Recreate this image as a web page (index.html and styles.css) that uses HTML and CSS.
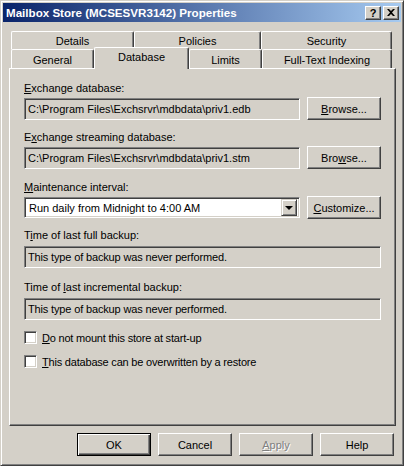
FILE: index.html
```html
<!DOCTYPE html>
<html lang="en">
<head>
    <meta charset="UTF-8">
    <meta name="viewport" content="width=device-width, initial-scale=1.0">
    <title>Mailbox Store Properties</title>
    <link rel="stylesheet" href="styles.css">
</head>
<body>

<div class="window">
    <div class="titlebar">
        <span class="title">Mailbox Store (MCSESVR3142) Properties</span>
        <div class="caption-btns">
            <span class="cap-btn help">?</span>
            <span class="cap-btn">
                <svg width="8" height="7" viewBox="0 0 8 7"><path d="M0 0h2l2 2 2-2h2L5 3.5 8 7H6L4 5 2 7H0l3-3.5z" fill="#000"/></svg>
            </span>
        </div>
    </div>

    <div class="dlg-body">
        <!-- pestañas -->
        <div class="tab-row back">
            <div class="tab w-details">Details</div>
            <div class="tab w-policies">Policies</div>
            <div class="tab w-security">Security</div>
        </div>
        <div class="tab-row front">
            <div class="tab w-general">General</div>
            <div class="tab active w-database">Database</div>
            <div class="tab w-limits">Limits</div>
            <div class="tab w-fulltext">Full-Text Indexing</div>
        </div>

        <div class="panel">
            <div class="group g1">
                <div class="label"><u>E</u>xchange database:</div>
                <div class="field-row">
                    <div class="field ro">C:\Program Files\Exchsrvr\mdbdata\priv1.edb</div>
                    <span class="btn"><u>B</u>rowse...</span>
                </div>
            </div>

            <div class="group g2">
                <div class="label">E<u>x</u>change streaming database:</div>
                <div class="field-row">
                    <div class="field ro">C:\Program Files\Exchsrvr\mdbdata\priv1.stm</div>
                    <span class="btn">Bro<u>w</u>se...</span>
                </div>
            </div>

            <div class="group g3">
                <div class="label"><u>M</u>aintenance interval:</div>
                <div class="field-row">
                    <div class="combo">
                        <span class="combo-text">Run daily from Midnight to 4:00 AM</span>
                        <span class="combo-btn"><span class="arrow"></span></span>
                    </div>
                    <span class="btn"><u>C</u>ustomize...</span>
                </div>
            </div>

            <div class="group g4">
                <div class="label">T<u>i</u>me of last full backup:</div>
                <div class="field ro wide">This type of backup was never performed.</div>
            </div>

            <div class="group g5">
                <div class="label">Time of <u>l</u>ast incremental backup:</div>
                <div class="field ro wide">This type of backup was never performed.</div>
            </div>

            <div class="check c1">
                <span class="box"></span>
                <span class="check-text"><u>D</u>o not mount this store at start-up</span>
            </div>
            <div class="check c2">
                <span class="box"></span>
                <span class="check-text"><u>T</u>his database can be overwritten by a restore</span>
            </div>
        </div>

        <div class="footer">
            <span class="btn default">OK</span>
            <span class="btn">Cancel</span>
            <span class="btn disabled"><u>A</u>pply</span>
            <span class="btn">Help</span>
        </div>
    </div>
</div>

</body>
</html>
```

FILE: styles.css
```css
body { margin: 0; background: #d4d0c8; font-family: "Liberation Sans", Arial, sans-serif; font-size: 11px; color: #000; }

.window { width: 404px; height: 466px; box-sizing: border-box; display: flex; flex-direction: column; padding: 2px; background: #d4d0c8; border: 1px solid; border-color: #d4d0c8 #404040 #404040 #d4d0c8; box-shadow: inset 1px 1px 0 #fff, inset -1px -1px 0 #808080; }

/* barra de titulo */
.titlebar { height: 19px; display: flex; align-items: center; justify-content: space-between; padding: 0 2px 0 3px; background: linear-gradient(to right, #0a246a, #a6caf0); }
.title { color: #fff; font-weight: bold; font-size: 11.6px; }
.caption-btns { display: flex; gap: 2px; }
.cap-btn { width: 16px; height: 14px; box-sizing: border-box; display: flex; align-items: center; justify-content: center; background: #d4d0c8; border: 1px solid; border-color: #fff #404040 #404040 #fff; box-shadow: inset -1px -1px 0 #808080; font-weight: bold; font-size: 11px; line-height: 12px; }

.dlg-body { flex: 1; display: flex; flex-direction: column; padding: 9px 5px 0 6px; }

/* pestañas */
.tab-row { display: flex; margin-left: 2px; }
.tab-row.back { height: 18px; }
.tab-row.front { height: 19px; align-items: flex-start; }
.tab { box-sizing: border-box; height: 100%; display: flex; align-items: center; justify-content: center; border-top: 1px solid #fff; border-left: 1px solid #fff; border-right: 1px solid #404040; box-shadow: inset -1px 0 0 #808080; border-radius: 2px 2px 0 0; background: #d4d0c8; }
.tab-row.back .tab { padding-top: 1px; }
.tab-row.front .tab { height: 19px; padding-top: 2px; }
.tab-row.front .tab.active { height: 22px; margin-top: -2px; padding-top: 0; padding-bottom: 3px; z-index: 1; }
.w-details { width: 123px; }
.w-policies { width: 127px; }
.w-security { width: 131px; }
.w-general { width: 83px; }
.w-database { width: 95px; }
.w-limits { width: 73px; }
.w-fulltext { width: 130px; }

.panel { flex: 1; display: flex; flex-direction: column; padding: 13px 14px 0 14px; border: 1px solid; border-color: #fff #404040 #404040 #fff; box-shadow: inset -1px -1px 0 #808080; }

.label { height: 13px; line-height: 13px; white-space: nowrap; }
.field-row { display: flex; align-items: center; gap: 7px; margin-top: 2px; }
.g2 { margin-top: 11px; }
.g3 { margin-top: 12px; }
.g4 { margin-top: 10px; }
.g5 { margin-top: 13px; }
.g4 .field, .g5 .field { margin-top: 4px; letter-spacing: -0.15px; }

.field { box-sizing: border-box; height: 22px; flex: 1; display: flex; align-items: center; padding: 0 3px; white-space: nowrap; border: 1px solid; border-color: #808080 #fff #fff #808080; box-shadow: inset 1px 1px 0 #404040, inset -1px -1px 0 #d4d0c8; }
.field.wide { flex: none; }

.combo { box-sizing: border-box; height: 21px; flex: 1; display: flex; align-items: center; justify-content: space-between; padding: 0 2px 0 4px; background: #fff; border: 1px solid; border-color: #808080 #fff #fff #808080; box-shadow: inset 1px 1px 0 #404040, inset -1px -1px 0 #d4d0c8; }
.combo-btn { width: 16px; height: 17px; box-sizing: border-box; display: flex; align-items: center; justify-content: center; background: #d4d0c8; border: 1px solid; border-color: #d4d0c8 #404040 #404040 #d4d0c8; box-shadow: inset 1px 1px 0 #fff, inset -1px -1px 0 #808080; }
.arrow { width: 0; height: 0; border-left: 4px solid transparent; border-right: 4px solid transparent; border-top: 4px solid #000; margin-top: 1px; }

.btn { box-sizing: border-box; width: 74px; height: 23px; flex: none; display: flex; align-items: center; justify-content: center; background: #d4d0c8; border: 1px solid; border-color: #fff #404040 #404040 #fff; box-shadow: inset -1px -1px 0 #808080; }
.btn.default { border-color: #000; box-shadow: inset 1px 1px 0 #fff, inset -1px -1px 0 #404040, inset -2px -2px 0 #808080; }
.btn.disabled { color: #808080; text-shadow: 1px 1px 0 #fff; }

.check { display: flex; align-items: center; gap: 5px; height: 13px; }
.check-text { letter-spacing: -0.2px; }
.c1 { margin-top: 11px; }
.c2 { margin-top: 11px; }
.box { width: 13px; height: 13px; box-sizing: border-box; background: #fff; border: 1px solid; border-color: #808080 #fff #fff #808080; box-shadow: inset 1px 1px 0 #404040, inset -1px -1px 0 #d4d0c8; }

.footer { display: flex; justify-content: flex-end; gap: 7px; padding: 7px 2px 7px 0; }
```
